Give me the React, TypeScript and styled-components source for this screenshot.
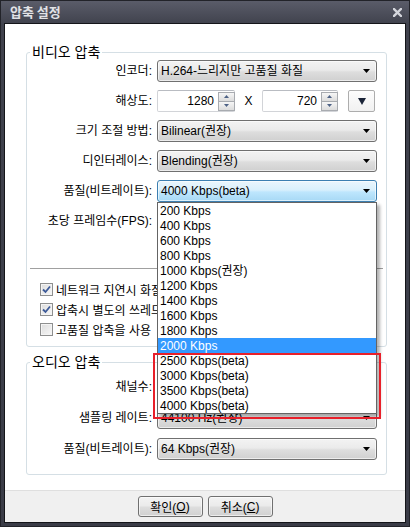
import React from "react";
import styled, { createGlobalStyle, css } from "styled-components";

const GlobalStyle = createGlobalStyle`
  html, body {
    margin: 0;
    padding: 0;
    width: 410px;
    height: 527px;
    overflow: hidden;
    background: #3b3d48;
  }
  body {
    font-family: "Liberation Sans", "Noto Sans CJK KR", sans-serif;
    font-size: 12px;
    color: #000;
  }
  * { box-sizing: border-box; }
`;

const Window = styled.div`
  width: 410px;
  height: 527px;
  display: flex;
  flex-direction: column;
  padding: 0 3px 3px;
  border: 1px solid #222329;
  background: linear-gradient(#5a5c69 0, #40424d 23px, #3a3c47 100%);
`;

const TitleBar = styled.div`
  height: 22px;
  flex: none;
  display: flex;
  align-items: center;
  justify-content: space-between;
  padding: 0 4px 0 6px;
`;

const Title = styled.span`
  font-family: "Noto Sans CJK KR", sans-serif;
  font-size: 13px;
  font-weight: 700;
  color: #e1e2e6;
  line-height: 22px;
`;

const CloseButton = styled.span`
  display: flex;
  width: 9px;
  height: 9px;
  margin-top: 1px;
`;

const Panel = styled.div`
  flex: 1;
  display: flex;
  flex-direction: column;
  border: 1px solid #141519;
  background: #fff;
  min-height: 0;
`;

const Body = styled.div`
  flex: 1;
  padding: 20px 0 0 21px;
  display: flex;
  flex-direction: column;
`;

const Group = styled.fieldset<{ $gap?: number; $padTop?: number; $padBottom?: number }>`
  width: 361px;
  margin: ${(p) => p.$gap ?? 0}px 0 0;
  padding: ${(p) => p.$padTop ?? 0}px 0 ${(p) => p.$padBottom ?? 0}px;
  border: 1px solid #d5dfe5;
  border-radius: 3px;
  min-width: 0;
`;

const Legend = styled.legend`
  margin-left: 3px;
  padding: 0 2px;
  font-size: 14px;
  line-height: 16px;
`;

const FormGrid = styled.div<{ $rowGap: number }>`
  display: grid;
  grid-template-columns: 125px 220px;
  column-gap: 5px;
  row-gap: ${(p) => p.$rowGap}px;
  grid-auto-rows: 22px;
`;

const Label = styled.div`
  text-align: right;
  line-height: 22px;
  white-space: nowrap;
`;

const SelectBox = styled.div<{ $focused?: boolean }>`
  position: relative;
  height: 22px;
  display: flex;
  align-items: center;
  justify-content: space-between;
  padding: 0 6px 0 3px;
  border: 1px solid #707070;
  border-radius: 3px;
  white-space: nowrap;
  background: linear-gradient(#f3f3f3 0%, #ebebeb 45%, #dddddd 55%, #d0d0d0 100%);
  box-shadow: inset 0 0 0 1px rgba(255, 255, 255, 0.6);
  ${(p) =>
    p.$focused &&
    css`
      border-color: #3c7fb1;
      background: linear-gradient(#eaf6fd 0%, #d9f0fc 45%, #bee6fd 55%, #a7d9f5 100%);
    `}
`;

const SelectText = styled.span`
  line-height: 20px;
`;

const Caret = () => (
  <svg width="7" height="4" viewBox="0 0 7 4">
    <path d="M0 0H7L3.5 4Z" fill="#000" />
  </svg>
);

const Select = ({ value, focused, children }: { value: string; focused?: boolean; children?: React.ReactNode }) => (
  <SelectBox $focused={focused}>
    <SelectText>{value}</SelectText>
    <Caret />
    {children}
  </SelectBox>
);

const ResolutionRow = styled.div`
  display: flex;
  align-items: center;
  height: 22px;
`;

const NumberField = styled.div<{ $width: number }>`
  width: ${(p) => p.$width}px;
  height: 22px;
  display: flex;
  align-items: center;
  border: 1px solid #d2d4d8;
  border-top-color: #b9bcc2;
  border-radius: 2px;
  background: #fff;
`;

const NumberValue = styled.span`
  flex: 1;
  text-align: right;
  padding-right: 4px;
  line-height: 20px;
`;

const Spinner = styled.div`
  width: 17px;
  height: 19px;
  display: flex;
  flex-direction: column;
  margin-right: -1px;
`;

const SpinHalf = styled.div<{ $down?: boolean }>`
  flex: 1;
  display: flex;
  align-items: center;
  justify-content: center;
  border: 1px solid #a8abb0;
  ${(p) => (p.$down ? "border-top: none;" : "")}
  background: linear-gradient(#f6f6f6, #dcdcdc);
`;

const SpinArrow = ({ down }: { down?: boolean }) => (
  <svg width="5" height="3" viewBox="0 0 5 3">
    <path d={down ? "M0 0H5L2.5 3Z" : "M0 3H5L2.5 0Z"} fill="#4d6185" />
  </svg>
);

const Times = styled.span`
  width: 27px;
  text-align: center;
`;

const PresetButton = styled.div`
  width: 27px;
  height: 22px;
  margin-left: 10px;
  display: flex;
  align-items: center;
  justify-content: center;
  border: 1px solid #adadad;
  border-radius: 2px;
  background: linear-gradient(#fdfdfd, #f1f1f1);
`;

const Divider = styled.div`
  height: 1px;
  margin: 36px 3px 0;
  background: #a0a0a0;
`;

const CheckList = styled.div`
  display: flex;
  flex-direction: column;
  padding: 10px 0 0 13px;
`;

const CheckRow = styled.div`
  height: 20px;
  display: flex;
  align-items: center;
  gap: 3px;
  white-space: nowrap;
`;

const Box = styled.span`
  width: 13px;
  height: 13px;
  flex: none;
  display: flex;
  align-items: center;
  justify-content: center;
  border: 1px solid #8e8f8f;
  background: linear-gradient(135deg, #dcdcdc, #f8f8f8);
  box-shadow: inset 0 0 0 1px #f4f4f4;
`;

const CheckBox = ({ checked, label }: { checked?: boolean; label: string }) => (
  <CheckRow>
    <Box>
      {checked && (
        <svg width="9" height="9" viewBox="0 0 9 9">
          <path d="M1 4.5L3.5 7L8 1.5" fill="none" stroke="#3d5a98" strokeWidth="1.8" />
        </svg>
      )}
    </Box>
    <span>{label}</span>
  </CheckRow>
);

const DropList = styled.div`
  position: absolute;
  top: calc(100% + 1px);
  left: -1px;
  width: 220px;
  z-index: 10;
  border: 1px solid #646464;
  background: #fff;
  box-shadow: 3px 3px 3px rgba(0, 0, 0, 0.3);
`;

const DropItem = styled.div<{ $active?: boolean }>`
  height: 15px;
  line-height: 17px;
  overflow: hidden;
  padding-left: 2px;
  white-space: nowrap;
  ${(p) =>
    p.$active &&
    css`
      background: #3399ff;
      color: #fff;
    `}
`;

const BetaMark = styled.div`
  position: absolute;
  left: -5px;
  top: 150px;
  width: 228px;
  height: 66px;
  border: 2px solid #e8202a;
  pointer-events: none;
`;

const Footer = styled.div`
  height: 32px;
  flex: none;
  display: flex;
  justify-content: center;
  gap: 5px;
  padding-top: 5px;
  border-top: 1px solid #dfdfdf;
  background: #f0f0f0;
`;

const Button = styled.div`
  width: 65px;
  height: 21px;
  display: flex;
  align-items: center;
  justify-content: center;
  border: 1px solid #707070;
  border-radius: 3px;
  background: linear-gradient(#f3f3f3 0%, #ebebeb 45%, #dddddd 55%, #d0d0d0 100%);
  box-shadow: inset 0 0 0 1px rgba(255, 255, 255, 0.6);
`;

const Key = styled.span`
  text-decoration: underline;
`;

const bitrates = [
  "200 Kbps",
  "400 Kbps",
  "600 Kbps",
  "800 Kbps",
  "1000 Kbps(권장)",
  "1200 Kbps",
  "1400 Kbps",
  "1600 Kbps",
  "1800 Kbps",
  "2000 Kbps",
  "2500 Kbps(beta)",
  "3000 Kbps(beta)",
  "3500 Kbps(beta)",
  "4000 Kbps(beta)",
];

export default function App() {
  return (
    <>
      <GlobalStyle />
      <Window>
        <TitleBar>
          <Title>압축 설정</Title>
          <CloseButton>
            <svg width="9" height="9" viewBox="0 0 9 9">
              <path d="M1 1L8 8M8 1L1 8" stroke="#d4d6dc" strokeWidth="2.4" strokeLinecap="square" />
            </svg>
          </CloseButton>
        </TitleBar>
        <Panel>
          <Body>
            <Group $padBottom={7}>
              <Legend>비디오 압축</Legend>
              <FormGrid $rowGap={8}>
                <Label>인코더:</Label>
                <Select value="H.264-느리지만 고품질 화질" />

                <Label>해상도:</Label>
                <ResolutionRow>
                  <NumberField $width={78}>
                    <NumberValue>1280</NumberValue>
                    <Spinner>
                      <SpinHalf><SpinArrow /></SpinHalf>
                      <SpinHalf $down><SpinArrow down /></SpinHalf>
                    </Spinner>
                  </NumberField>
                  <Times>X</Times>
                  <NumberField $width={76}>
                    <NumberValue>720</NumberValue>
                    <Spinner>
                      <SpinHalf><SpinArrow /></SpinHalf>
                      <SpinHalf $down><SpinArrow down /></SpinHalf>
                    </Spinner>
                  </NumberField>
                  <PresetButton>
                    <svg width="8" height="7" viewBox="0 0 8 7">
                      <path d="M0 0H8L4 7Z" fill="#1b2438" />
                    </svg>
                  </PresetButton>
                </ResolutionRow>

                <Label>크기 조절 방법:</Label>
                <Select value="Bilinear(권장)" />

                <Label>디인터레이스:</Label>
                <Select value="Blending(권장)" />

                <Label>품질(비트레이트):</Label>
                <Select value="4000 Kbps(beta)" focused>
                  <DropList>
                    {bitrates.map((b) => (
                      <DropItem key={b} $active={b === "2000 Kbps"}>
                        {b}
                      </DropItem>
                    ))}
                    <BetaMark />
                  </DropList>
                </Select>

                <Label>초당 프레임수(FPS):</Label>
                <Select value="30 fps" />
              </FormGrid>
              <Divider />
              <CheckList>
                <CheckBox checked label="네트워크 지연시 화질 자동 조절" />
                <CheckBox checked label="압축시 별도의 쓰레드 사용" />
                <CheckBox label="고품질 압축을 사용" />
              </CheckList>
            </Group>

            <Group $gap={7} $padTop={6} $padBottom={14}>
              <Legend>오디오 압축</Legend>
              <FormGrid $rowGap={9}>
                <Label>채널수:</Label>
                <Select value="스테레오" />

                <Label>샘플링 레이트:</Label>
                <Select value="44100 Hz(권장)" />

                <Label>품질(비트레이트):</Label>
                <Select value="64 Kbps(권장)" />
              </FormGrid>
            </Group>
          </Body>
          <Footer>
            <Button>
              확인(<Key>O</Key>)
            </Button>
            <Button>
              취소(<Key>C</Key>)
            </Button>
          </Footer>
        </Panel>
      </Window>
    </>
  );
}
